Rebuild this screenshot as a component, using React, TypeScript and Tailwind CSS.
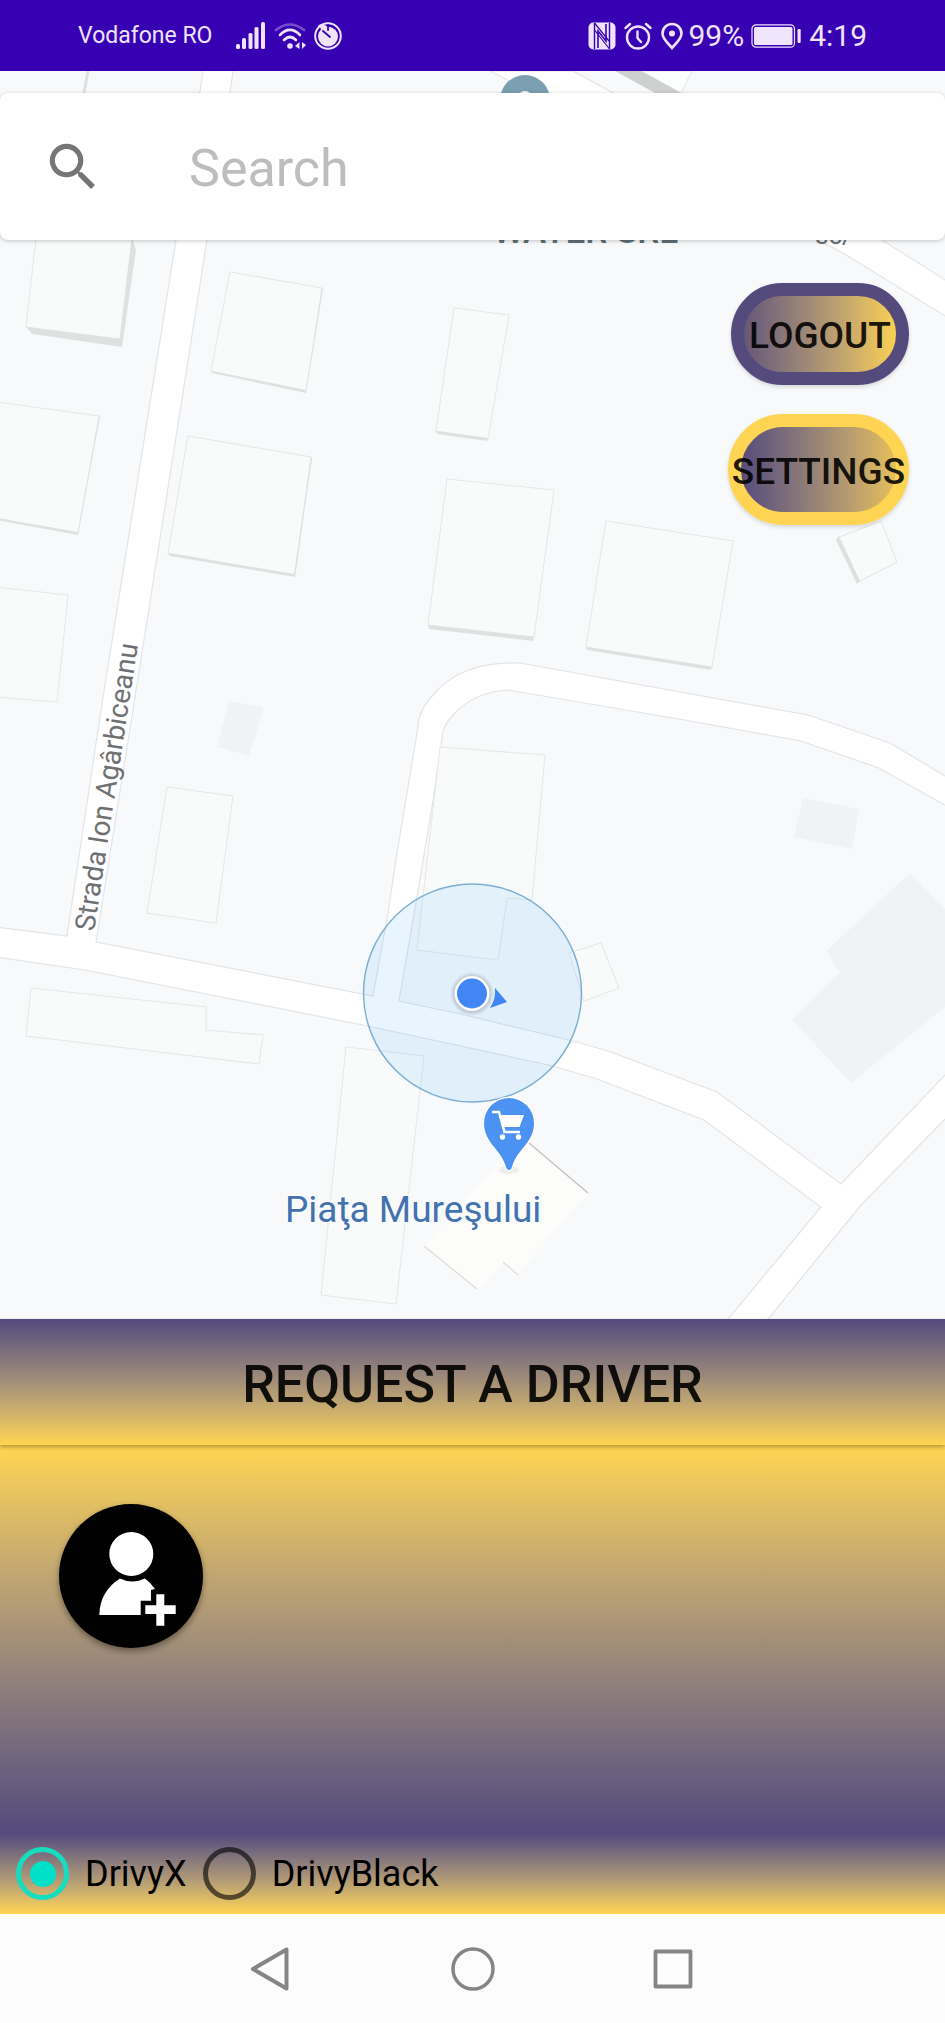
import { MdSearch } from "react-icons/md";

const BUILDINGS = [
  "36,238 132,238 120,339 26,327",
  "230,272 322,288 306,391 211,371",
  "-4,402 99,416 78,533 -4,518",
  "188,436 311,457 295,575 168,553",
  "-4,587 68,595 57,702 -4,697",
  "454,308 509,315 488,439 436,431",
  "447,479 554,490 534,637 428,625",
  "606,521 733,541 712,667 586,647",
  "837,538 881,521 897,562 858,582",
  "167,787 233,796 216,923 147,913",
  "31,988 206,1007 206,1030 263,1035 259,1064 26,1036",
  "346,1047 424,1056 396,1304 321,1295",
  "440,747 545,755 532,900 507,898 498,960 417,950",
  "569,953 601,943 619,988 584,1001",
];

const WALLS = [
  "26,327 120,339 132,238 136,250 122,347 32,334",
  "211,371 306,390 322,288 323,289 306,393 212,373",
  "-4,518 78,532 99,416 100,417 78,535 -4,520",
  "168,553 294,574 311,457 312,458 295,577 170,556",
  "436,431 488,438 487,441 437,434",
  "428,625 534,637 533,641 429,629",
  "586,647 712,667 711,670 587,650",
  "837,538 839,536 860,581 857,584 836,540",
];

const PLAIN_BLOCKS = [
  "229,701 264,707 249,756 217,747",
  "803,798 859,809 852,849 794,837",
  "910,873 950,914 950,1003 851,1083 792,1020 840,972 826,951",
];

function MapCanvas() {
  return (
    <svg
      className="absolute inset-0 h-full w-full"
      viewBox="0 71 945 1248"
      preserveAspectRatio="xMidYMid slice"
      role="img"
      aria-label="Map around Piaţa Mureşului"
    >
      <defs>
        <radialGradient id="dotShadow">
          <stop offset="0.7" stopColor="#000" stopOpacity="0.25" />
          <stop offset="1" stopColor="#000" stopOpacity="0" />
        </radialGradient>
      </defs>
      <rect x="0" y="71" width="945" height="1248" fill="#f8f9fb" />
      {PLAIN_BLOCKS.map((p) => (
        <polygon key={p} points={p} fill="#f1f2f4" />
      ))}

      <g fill="#fff" stroke="#e3e4e6" strokeWidth="1.2">
        <path d="M490 71 843 253 950 319V283L882 240 573 71z" />
        <path d="M204 66 176 240 101 710 67 936 -5 927V957L85 970 363 1025 553 1066 597 1079 704 1120 821 1207 724 1324H764L861 1205 950 1114V1070L841 1184 717 1092 608 1051 573 1041 465 1015 399 1001 417 897 432 807 441 747C442 732 444 724 454 714Q474 692 508 690L679 719 801 741 879 768 950 808V779L890 743 808 715 520 663C476 661 449 676 434 694 420 709 418 720 418 727L397 853 388 913 373 996 96 942 133 710 207 240 234 66z" />
      </g>
      <path d="M88 71 84 93" stroke="#dfe1e0" strokeWidth="3" />
      <path d="M641 71H692L681 93z" fill="#fdfefe" stroke="#e3e4e6" />
      <path d="M615 71H641L681 93H655z" fill="#cfd1d0" />

      {BUILDINGS.map((p) => (
        <polygon key={p} points={p} fill="#f9fbfa" stroke="#e6e8e8" strokeWidth="1.1" />
      ))}
      {WALLS.map((p) => (
        <polygon key={p} points={p} fill="#dfe1e1" />
      ))}
      <path d="M529 1143 588 1193 515 1277 503 1263 478 1291 424 1246 500 1160z" fill="#fcfcfa" />
      <path d="M529 1143 588 1193" stroke="#c6c2bf" strokeWidth="1.4" />
      <path d="M424 1246 477 1289M503 1262 518 1275" stroke="#dedcd8" strokeWidth="1.3" />

      <circle cx="525" cy="100" r="25" fill="#7b9fb0" />
      <circle cx="525" cy="98" r="7" fill="#fff" />
      <g className="font-['Roboto',sans-serif]">
        <text x="493" y="243" fontSize="35" fontWeight="500" fill="#5f7178">
          WATER SRL
        </text>
        <text x="815" y="244" fontSize="26" fill="#6b6f73">
          sc/
        </text>
        <text fontSize="28" fill="#6f7072" transform="translate(94 932) rotate(-81.3)">
          Strada Ion Agârbiceanu
        </text>
      </g>

      <circle cx="472.5" cy="993" r="109" fill="#30a5ff" fillOpacity="0.11" stroke="#7aaed4" strokeWidth="1.4" />
      <circle cx="472" cy="994" r="22" fill="url(#dotShadow)" />
      <path d="M495 988 507 1002 490 1008Q496 999 495 988z" fill="#4285f4" />
      <circle cx="472" cy="993.5" r="17.5" fill="#fff" />
      <circle cx="472" cy="993.5" r="15" fill="#4285f4" />

      <ellipse cx="509" cy="1170" rx="10" ry="4" fill="#000" fillOpacity="0.06" />
      <path
        d="M509 1098a25 25 0 0 0-25 25c0 20 17 26 22 44 1 4 5 4 6 0 5-18 22-24 22-44a25 25 0 0 0-25-25z"
        fill="#4b92f3"
        stroke="#fff"
        strokeWidth="2.5"
        paintOrder="stroke"
      />
      <path
        d="M492 1112H499L504.500 1132H520"
        fill="none"
        stroke="#fff"
        strokeWidth="2.6"
      />
      <path d="M499 1115H524L519.500 1127H503z" fill="#fff" />
      <circle cx="502.500" cy="1137" r="2.700" fill="#fff" />
      <circle cx="518.500" cy="1137" r="2.700" fill="#fff" />
      <text
        x="285"
        y="1222"
        fontSize="37"
        fill="#4272b0"
        stroke="#fbfcfd"
        strokeWidth="3"
        paintOrder="stroke"
        className="font-['Roboto',sans-serif]"
      >
        Piaţa Mureşului
      </text>
    </svg>
  );
}

function StatusBar() {
  return (
    <header className="flex h-[71px] shrink-0 items-center justify-between bg-[#3700b3] px-[78px] text-[#efe4fb]">
      <div className="flex items-center">
        <span className="mr-6 text-[23px] leading-8">Vodafone RO</span>
        <svg className="mr-2 h-7 w-[30px]" viewBox="0 0 30 28" fill="currentColor" aria-hidden="true">
          <rect x="0" y="22" width="4" height="5" rx="1.500" />
          <rect x="6" y="16" width="4" height="11" rx="1.500" />
          <rect x="12.500" y="11" width="4" height="16" rx="1.500" />
          <rect x="18.500" y="5" width="4" height="22" rx="1.500" />
          <rect x="25" y="0" width="4" height="27" rx="1.500" />
        </svg>
        <svg className="mr-2 h-7 w-8" viewBox="0 0 32 28" fill="none" stroke="currentColor" strokeWidth="2.600" strokeLinecap="round" aria-hidden="true">
          <path d="M2 8Q16-3 30 8" opacity="0.35" />
          <path d="M6 13Q16 3 26 13" />
          <path d="M10 18Q16 12 22 18" />
          <circle cx="16" cy="24" r="2.800" fill="currentColor" stroke="none" />
          <path d="M25.500 20V27L21 24zM28 20V27L32 23z" fill="currentColor" stroke="none" />
        </svg>
        <svg className="h-7 w-7" viewBox="0 0 28 28" aria-hidden="true">
          <circle cx="14" cy="14" r="12.800" fill="none" stroke="currentColor" strokeWidth="2" />
          <circle cx="14" cy="14.500" r="10" fill="currentColor" />
          <path d="M4 3 9 2 14 5V9L8 8z" fill="currentColor" />
          <path d="M14 3v5M9 9l7 6" stroke="#3700b3" strokeWidth="1.800" strokeLinecap="round" />
          <path d="M14 4Q19 4 21 7" stroke="#3700b3" strokeWidth="1.500" fill="none" />
        </svg>
      </div>
      <div className="flex items-center">
        <svg className="mr-2 h-7 w-7" viewBox="0 0 28 28" aria-hidden="true">
          <rect x="0.500" y="0.500" width="27" height="27" rx="5" fill="currentColor" />
          <path d="M6.500 1V27M21.500 1V27" stroke="#3700b3" strokeWidth="1.400" />
          <path d="M10 26V9L18 19V2" fill="none" stroke="#3700b3" strokeWidth="1.600" />
          <path d="M6.500 1 21 19M6.500 8 21.500 27" stroke="#3700b3" strokeWidth="1.200" />
        </svg>
        <svg className="mr-2 h-7 w-7" viewBox="0 0 28 28" fill="none" stroke="currentColor" strokeWidth="2.400" strokeLinecap="round" aria-hidden="true">
          <circle cx="14" cy="15.500" r="11" />
          <path d="M1.500 6 6 2M26.500 6 22 2M13.500 9.500V16L17 20" />
        </svg>
        <svg className="mr-1 h-7 w-6" viewBox="0 0 24 28" aria-hidden="true">
          <path d="M12 2A9.500 9.500 0 0 0 2.500 11.500C2.500 17 8 21 12 26 16 21 21.500 17 21.500 11.500A9.500 9.500 0 0 0 12 2z" fill="none" stroke="currentColor" strokeWidth="2.600" />
          <circle cx="12" cy="11.500" r="3" fill="currentColor" />
        </svg>
        <span className="mr-[7px] text-[30px] leading-8">99%</span>
        <svg className="mr-2 h-6 w-[50px]" viewBox="0 0 50 24" aria-hidden="true">
          <rect x="1" y="0.800" width="42.500" height="22.400" rx="4" fill="none" stroke="currentColor" strokeWidth="1.200" />
          <rect x="3" y="3" width="38.500" height="18" rx="1.500" fill="currentColor" />
          <rect x="46.500" y="5" width="3.200" height="14" rx="1.200" fill="currentColor" />
        </svg>
        <span className="text-[30px] leading-8">4:19</span>
      </div>
    </header>
  );
}

function RideOption({ label, checked }: { label: string; checked?: boolean }) {
  return (
    <label className="flex items-center gap-4 text-[36px] leading-10 text-black">
      <input
        type="radio"
        name="ride"
        defaultChecked={checked}
        className="grid size-[53px] appearance-none place-items-center rounded-full border-[5px] border-black/60 before:size-[26px] before:rounded-full checked:border-[#16dcc0] checked:before:bg-[#00dfc8]"
      />
      {label}
    </label>
  );
}

export default function App() {
  return (
    <div className="flex min-h-screen flex-col bg-[#fcfcfc] font-['Roboto',sans-serif]">
      <StatusBar />

      <main className="flex flex-1 flex-col">
        <section className="relative flex min-h-[800px] flex-1 flex-col">
          <MapCanvas />
          <form className="relative mt-[22px] flex h-[147px] items-center rounded-lg bg-white pl-[42px] shadow-[0_1px_4px_rgba(0,0,0,0.22)]">
            <label htmlFor="place" aria-label="Search">
              <MdSearch className="size-[62px] text-[#757575]" />
            </label>
            <input
              id="place"
              type="text"
              placeholder="Search"
              className="ml-[85px] min-w-0 flex-1 pt-1 text-[52px] leading-[64px] text-gray-800 outline-none placeholder:text-[#bdbdbd]"
            />
          </form>
          <div className="relative mt-[43px] mr-9 flex flex-col items-end gap-[29px] self-end">
            <button
              type="button"
              className="flex h-[102px] w-[178px] items-center justify-center rounded-full border-[13px] border-[#544a7c] bg-linear-to-r from-[#655779] to-[#fad051] bg-origin-padding pt-1 text-[37px] font-medium whitespace-nowrap text-black/90 shadow-[0_2px_4px_rgba(0,0,0,0.15)]"
            >
              LOGOUT
            </button>
            <button
              type="button"
              className="flex h-[111px] w-[181px] items-center justify-center rounded-full border-[13px] border-[#fed452] bg-linear-to-r from-[#574b7b] to-[#e6bf58] bg-origin-padding pt-1 text-[37px] font-medium whitespace-nowrap text-black/90 shadow-[0_2px_4px_rgba(0,0,0,0.15)]"
            >
              SETTINGS
            </button>
          </div>
        </section>

        <button
          type="button"
          className="relative h-[126px] bg-linear-to-b from-[#544a7c] to-[#ffd54f] pt-1.5 text-[52px] font-medium text-black/90 shadow-[0_2px_4px_rgba(0,0,0,0.3)]"
        >
          REQUEST A DRIVER
        </button>

        <section className="h-[388px] bg-linear-to-b from-[#ffd54f] to-[#544a7c] px-[59px] pt-[59px]">
          <button
            type="button"
            aria-label="Add passenger"
            className="size-36 rounded-full bg-black shadow-[0_3px_6px_rgba(0,0,0,0.4)]"
          >
            <svg viewBox="0 0 144 144" fill="#fff" aria-hidden="true">
              <circle cx="72.300" cy="50" r="22" />
              <path d="M61 74.500Q73 80.500 86 74.500 92 79 96 85L92 86V96.700H81.700V111H40.300Q41 87 61 74.500z" />
              <path d="M97.300 90.300H105.300V101.300H116.700V110H105.300V121.700H97.300V110H86.300V101.300H97.300z" />
            </svg>
          </button>
        </section>

        <div
          role="radiogroup"
          aria-label="Ride type"
          className="flex h-[81px] items-center gap-4 bg-linear-to-b from-[#544a7c] to-[#ffd54f] px-4"
        >
          <RideOption label="DrivyX" checked />
          <RideOption label="DrivyBlack" />
        </div>
      </main>

      <nav className="flex h-[109px] shrink-0 items-center justify-center bg-[#fcfcfc] text-[#858585]">
        <button type="button" aria-label="Back" className="flex w-[200px] justify-center">
          <svg className="size-11" viewBox="0 0 44 44" fill="none" stroke="currentColor" strokeWidth="4" strokeLinejoin="round" aria-hidden="true">
            <path d="M35.500 2.500V41.500L2 22z" />
          </svg>
        </button>
        <button type="button" aria-label="Home" className="flex w-[200px] justify-center">
          <svg className="size-11" viewBox="0 0 44 44" fill="none" stroke="currentColor" strokeWidth="3.500" aria-hidden="true">
            <circle cx="22" cy="22" r="20" />
          </svg>
        </button>
        <button type="button" aria-label="Recent apps" className="flex w-[200px] justify-center">
          <svg className="size-11" viewBox="0 0 44 44" fill="none" stroke="currentColor" strokeWidth="3.800" strokeLinejoin="round" aria-hidden="true">
            <rect x="4.500" y="4.500" width="35" height="35" />
          </svg>
        </button>
      </nav>
    </div>
  );
}
